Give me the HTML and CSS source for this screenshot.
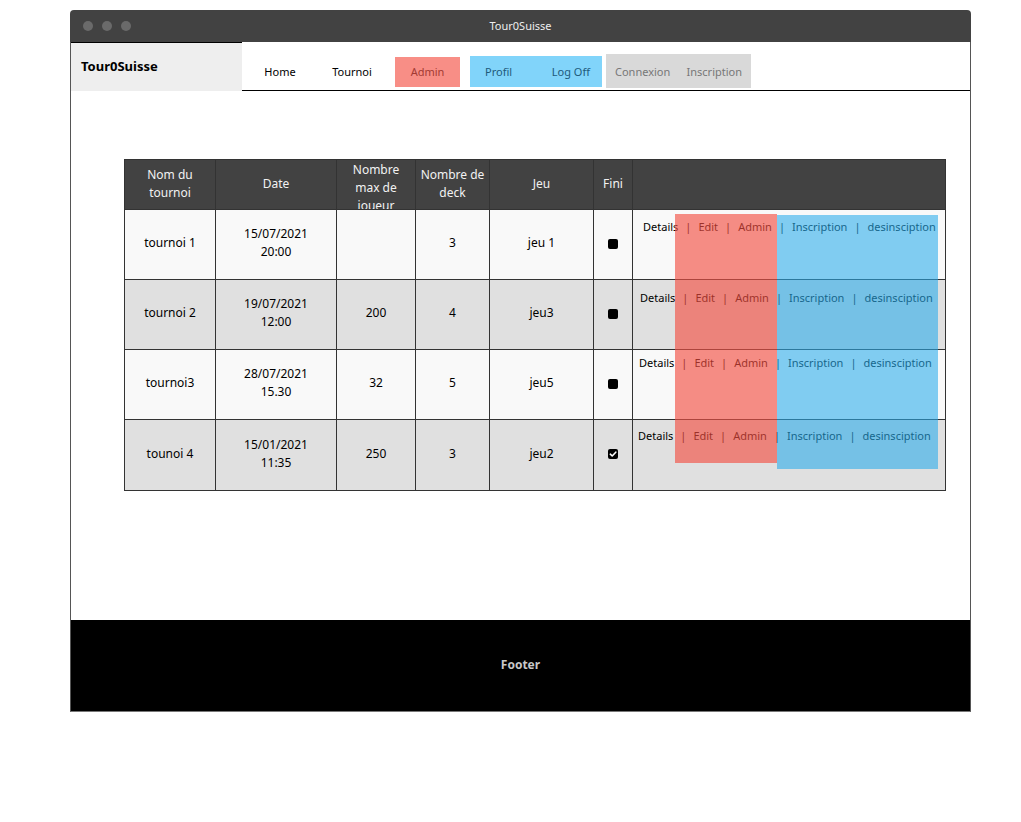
FILE: index.html
```html
<!DOCTYPE html>
<html lang="fr">
<head>
<meta charset="utf-8">
<title>Tour0Suisse</title>
<link rel="stylesheet" href="styles.css">
</head>
<body>
<div class="window">
  <div class="titlebar">
    <div class="dots"><span></span><span></span><span></span></div>
    <div class="title">Tour0Suisse</div>
    <div></div>
  </div>
  <div class="frame">
    <header class="header">
      <div class="logo">Tour0Suisse</div>
      <nav class="nav">
        <a class="nav-item home">Home</a>
        <a class="nav-item tournoi">Tournoi</a>
        <a class="nav-item admin">Admin</a>
        <div class="nav-group user"><a>Profil</a><a>Log Off</a></div>
        <div class="nav-group guest"><a>Connexion</a><a>Inscription</a></div>
      </nav>
    </header>
    <main class="main">
      <div class="table-wrap">
        <table class="grid">
          <colgroup>
            <col class="c1"><col class="c2"><col class="c3"><col class="c4"><col class="c5"><col class="c6"><col class="c7">
          </colgroup>
          <thead>
            <tr>
              <th><div class="th-in">Nom du<br>tournoi</div></th>
              <th><div class="th-in">Date</div></th>
              <th><div class="th-in">Nombre<br>max de<br>joueur</div></th>
              <th><div class="th-in">Nombre de<br>deck</div></th>
              <th><div class="th-in">Jeu</div></th>
              <th><div class="th-in">Fini</div></th>
              <th><div class="th-in"></div></th>
            </tr>
          </thead>
          <tbody>
            <tr class="light">
              <td>tournoi 1</td><td>15/07/2021<br>20:00</td><td></td><td>3</td><td>jeu 1</td>
              <td><span class="box"></span></td>
              <td class="actions r1"><span>Details</span><i>|</i><span>Edit</span><i>|</i><span>Admin</span><i>|</i><span>Inscription</span><i>|</i><span>desinsciption</span></td>
            </tr>
            <tr class="dark">
              <td>tournoi 2</td><td>19/07/2021<br>12:00</td><td>200</td><td>4</td><td>jeu3</td>
              <td><span class="box"></span></td>
              <td class="actions r2"><span>Details</span><i>|</i><span>Edit</span><i>|</i><span>Admin</span><i>|</i><span>Inscription</span><i>|</i><span>desinsciption</span></td>
            </tr>
            <tr class="light">
              <td>tournoi3</td><td>28/07/2021<br>15.30</td><td>32</td><td>5</td><td>jeu5</td>
              <td><span class="box"></span></td>
              <td class="actions r3"><span>Details</span><i>|</i><span>Edit</span><i>|</i><span>Admin</span><i>|</i><span>Inscription</span><i>|</i><span>desinsciption</span></td>
            </tr>
            <tr class="dark last">
              <td>tounoi 4</td><td>15/01/2021<br>11:35</td><td>250</td><td>3</td><td>jeu2</td>
              <td><span class="box checked"><svg viewBox="0 0 10 10" width="10" height="10"><path d="M2.3 5.2 L4.2 7 L7.8 3.2" fill="none" stroke="#fff" stroke-width="1.6" stroke-linecap="round" stroke-linejoin="round"/></svg></span></td>
              <td class="actions r4"><span>Details</span><i>|</i><span>Edit</span><i>|</i><span>Admin</span><i>|</i><span>Inscription</span><i>|</i><span>desinsciption</span></td>
            </tr>
          </tbody>
        </table>
        <div class="overlay red"></div>
        <div class="overlay blue"></div>
      </div>
    </main>
    <footer class="footer">Footer</footer>
  </div>
</div>
</body>
</html>
```
FILE: styles.css
```css
* { box-sizing: border-box; }
html, body { margin: 0; padding: 0; background: #fff; }
body {
  font-family: "Noto Sans", "Liberation Sans", sans-serif;
  color: #000;
  padding: 10px 0 0 70px;
}
.window { width: 901px; }
.titlebar {
  height: 32px;
  background: #424242;
  border-radius: 4px 4px 0 0;
  display: grid;
  grid-template-columns: 1fr auto 1fr;
  align-items: center;
}
.dots { display: flex; gap: 9px; padding-left: 13px; }
.dots span { width: 10px; height: 10px; border-radius: 50%; background: #6a6a6a; }
.title { color: #eee; font-size: 11px; line-height: 14px; }
.frame {
  border-left: 1px solid #555;
  border-right: 1px solid #555;
  border-bottom: 1px solid #777;
}
.header { display: flex; height: 49px; }
.logo {
  width: 171px;
  background: #eee;
  border-top: 1px solid #000;
  font-weight: 700;
  font-size: 13px;
  padding-left: 10px;
  display: flex;
  align-items: center;
  padding-bottom: 3px;
}
.nav {
  flex: 1;
  display: flex;
  align-items: flex-end;
  border-bottom: 1px solid #000;
  padding-left: 8px;
  font-size: 11px;
}
.nav a { cursor: pointer; }
.nav-item { height: 30px; line-height: 30px; margin-bottom: 3px; text-align: center; }
.home { width: 60px; }
.tournoi { width: 60px; margin-left: 12px; }
.admin { width: 65px; margin-left: 13px; background: #f88e86; color: #a33a33; }
.nav-group { display: flex; justify-content: space-between; align-items: center; }
.user {
  width: 132px; height: 31px; margin-left: 10px; margin-bottom: 3px;
  background: #81d4fa; color: #1e5a7a; padding: 0 12px 0 15px;
}
.guest {
  width: 145px; height: 34px; margin-left: 4px; margin-bottom: 2px;
  background: #d9d9d9; color: #777; padding: 0 9px;
}
.main { height: 529px; padding: 68px 0 0 53px; }
.table-wrap { position: relative; width: 822px; }
.grid {
  width: 822px;
  table-layout: fixed;
  border-collapse: collapse;
  font-size: 12px;
  line-height: 18px;
}
.c1 { width: 91px; } .c2 { width: 121px; } .c3 { width: 79px; } .c4 { width: 74px; }
.c5 { width: 104px; } .c6 { width: 39px; } .c7 { width: 313px; }
.grid th, .grid td { border: 1px solid #333; padding: 0; text-align: center; }
.grid th { background: #424242; color: #f2f2f2; font-weight: 400; height: 50px; }
.th-in {
  height: 48px; overflow: hidden;
  display: flex; flex-direction: column; justify-content: safe center; align-items: center;
  padding-bottom: 1px;
}
.grid td { height: 70px; vertical-align: middle; padding-bottom: 3px; }
.grid tr.last td { height: 71px; }
.light td { background: #f9f9f9; }
.dark td { background: #e0e0e0; }
.box {
  display: inline-block; width: 10px; height: 10px; border-radius: 2px; background: #000;
  vertical-align: middle;
}
.box svg { display: block; }
.grid td.actions {
  vertical-align: top; text-align: left; font-size: 11px; white-space: nowrap;
  padding: 8px 0 0 10px;
}
.grid td.actions.r2 { padding-top: 9px; padding-left: 7px; }
.grid td.actions.r3 { padding-top: 4px; padding-left: 6px; }
.grid td.actions.r4 { padding-top: 7px; padding-left: 5px; }
.actions i { font-style: normal; padding: 0 7px; }
.overlay { position: absolute; pointer-events: none; }
.red { left: 551px; top: 55px; width: 102px; height: 249px; background: rgba(243, 78, 66, 0.64); }
.blue { left: 653px; top: 56px; width: 161px; height: 254px; background: rgba(40, 170, 235, 0.58); }
.footer {
  height: 91px; background: #000; color: #c8c8c8; font-weight: 700; font-size: 12px;
  display: flex; align-items: center; justify-content: center; padding-bottom: 2px;
}
```
